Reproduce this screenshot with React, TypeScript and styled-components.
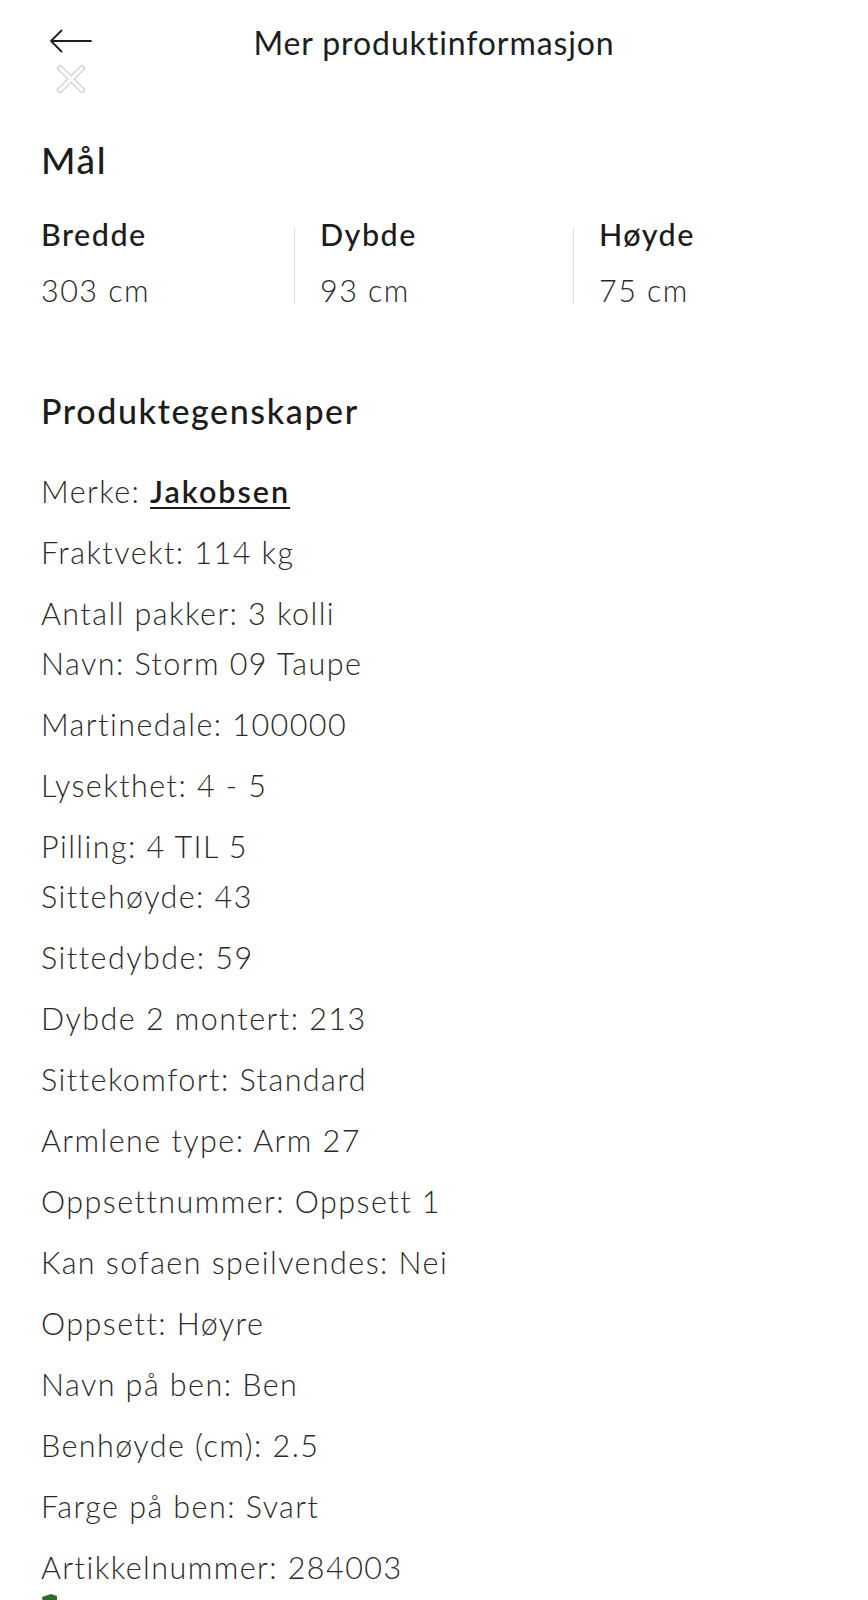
import styled, { createGlobalStyle } from "styled-components";

const GlobalStyle = createGlobalStyle`
  html, body {
    margin: 0;
    padding: 0;
    background: #fff;
  }
  body {
    font-family: Lato, "Liberation Sans", sans-serif;
    color: #222;
    -webkit-font-smoothing: antialiased;
  }
`;

const Page = styled.div`
  width: 868px;
  height: 1600px;
  overflow: hidden;
  background: #fff;
`;

const Header = styled.header`
  display: grid;
  grid-template-columns: 1fr auto 1fr;
  align-items: start;
  padding-top: 23px;
`;

const NavColumn = styled.div`
  display: flex;
  flex-direction: column;
  align-items: flex-start;
  padding-left: 48px;
`;

const IconButton = styled.button`
  display: flex;
  padding: 0;
  border: 0;
  background: none;
  cursor: pointer;
`;

const BackButton = styled(IconButton)`
  margin-top: 6px;
`;

const CloseButton = styled(IconButton)`
  margin: 10px 0 0 7px;
`;

const Title = styled.h1`
  margin: 0;
  font-size: 32px;
  line-height: 40px;
  font-weight: 400;
  letter-spacing: 0.9px;
  color: #1b1f24;
  white-space: nowrap;
`;

const Content = styled.main`
  padding: 0 41px;
`;

const SectionTitle = styled.h2<{ $size: number; $top: number }>`
  margin: ${(p) => p.$top}px 0 0;
  font-size: ${(p) => p.$size}px;
  line-height: ${(p) => Math.round(p.$size * 1.2)}px;
  font-weight: 500;
  letter-spacing: 1.6px;
  color: #1c1c1c;
`;

const Dimensions = styled.div`
  display: flex;
  margin-top: 46px;
`;

const Dimension = styled.div`
  flex: 1 1 0;
  display: flex;
  flex-direction: column;
  gap: 37px;
  padding-right: 25px;

  & + & {
    padding-left: 25px;
    border-left: 1px solid #dcdcdc;
  }
  &:last-child {
    padding-right: 0;
  }
`;

/* tight line box so the divider starts at the cap height of the label */
const DimLabel = styled.span`
  font-size: 30.5px;
  line-height: 12px;
  font-weight: 500;
  letter-spacing: 1.5px;
  color: #1c1c1c;
`;

const DimValue = styled.span`
  font-size: 30.5px;
  line-height: 27px;
  font-weight: 300;
  letter-spacing: 1.45px;
  color: #2a2a2a;
`;

const PropList = styled.ul`
  list-style: none;
  margin: 35px 0 0;
  padding: 0;
  display: flex;
  flex-direction: column;
  gap: 11px;
`;

const Prop = styled.li`
  font-size: 30.5px;
  line-height: 50px;
  font-weight: 300;
  color: #2a2a2a;
  letter-spacing: 1.45px;
`;

const BrandLink = styled.a`
  font-weight: 600;
  letter-spacing: 2px;
  color: #1c1c1c;
  text-decoration: underline;
  text-decoration-thickness: 2px;
  text-underline-offset: 4px;
`;

const EcoMark = styled.div`
  margin-top: 1px;
  display: flex;
`;

const ArrowLeft = () => (
  <svg width="44" height="24" viewBox="0 0 44 24" fill="none">
    <path
      d="M43 12H3M13.5 1.5L3 12l10.5 10.5"
      stroke="#1b1f24"
      strokeWidth="1.8"
      strokeLinecap="round"
      strokeLinejoin="round"
    />
  </svg>
);

const CloseCross = () => (
  <svg width="32" height="32" viewBox="0 0 32 32" fill="none">
    <g strokeLinecap="round">
      <path d="M5 5l22 22M27 5L5 27" stroke="#cfcfcf" strokeWidth="6" />
      <path d="M5 5l22 22M27 5L5 27" stroke="#ffffff" strokeWidth="3.2" />
    </g>
  </svg>
);

const Leaf = () => (
  <svg width="40" height="40" viewBox="0 0 40 40">
    <path d="M1 4l9-3 6 2v6l-7 9H3z" fill="#2f6b2f" />
  </svg>
);

type Item = { lines: string[]; brand?: string };

const items: Item[] = [
  { lines: ["Merke: "], brand: "Jakobsen" },
  { lines: ["Fraktvekt: 114 kg"] },
  { lines: ["Antall pakker: 3 kolli", "Navn: Storm 09 Taupe"] },
  { lines: ["Martinedale: 100000"] },
  { lines: ["Lysekthet: 4 - 5"] },
  { lines: ["Pilling: 4 TIL 5", "Sittehøyde: 43"] },
  { lines: ["Sittedybde: 59"] },
  { lines: ["Dybde 2 montert: 213"] },
  { lines: ["Sittekomfort: Standard"] },
  { lines: ["Armlene type: Arm 27"] },
  { lines: ["Oppsettnummer: Oppsett 1"] },
  { lines: ["Kan sofaen speilvendes: Nei"] },
  { lines: ["Oppsett: Høyre"] },
  { lines: ["Navn på ben: Ben"] },
  { lines: ["Benhøyde (cm): 2.5"] },
  { lines: ["Farge på ben: Svart"] },
  { lines: ["Artikkelnummer: 284003"] },
];

const dims = [
  { label: "Bredde", value: "303 cm" },
  { label: "Dybde", value: "93 cm" },
  { label: "Høyde", value: "75 cm" },
];

export default function App() {
  return (
    <Page>
      <GlobalStyle />
      <Header>
        <NavColumn>
          <BackButton aria-label="Tilbake">
            <ArrowLeft />
          </BackButton>
          <CloseButton aria-label="Lukk">
            <CloseCross />
          </CloseButton>
        </NavColumn>
        <Title>Mer produktinformasjon</Title>
        <div />
      </Header>
      <Content>
        <SectionTitle $size={37} $top={43}>
          Mål
        </SectionTitle>
        <Dimensions>
          {dims.map((d) => (
            <Dimension key={d.label}>
              <DimLabel>{d.label}</DimLabel>
              <DimValue>{d.value}</DimValue>
            </Dimension>
          ))}
        </Dimensions>
        <SectionTitle $size={34} $top={86}>
          Produktegenskaper
        </SectionTitle>
        <PropList>
          {items.map((it, i) => (
            <Prop key={i}>
              {it.lines.map((l, j) => (
                <span key={j}>
                  {j > 0 && <br />}
                  {l}
                </span>
              ))}
              {it.brand && <BrandLink href="#">{it.brand}</BrandLink>}
            </Prop>
          ))}
        </PropList>
        <EcoMark>
          <Leaf />
        </EcoMark>
      </Content>
    </Page>
  );
}
